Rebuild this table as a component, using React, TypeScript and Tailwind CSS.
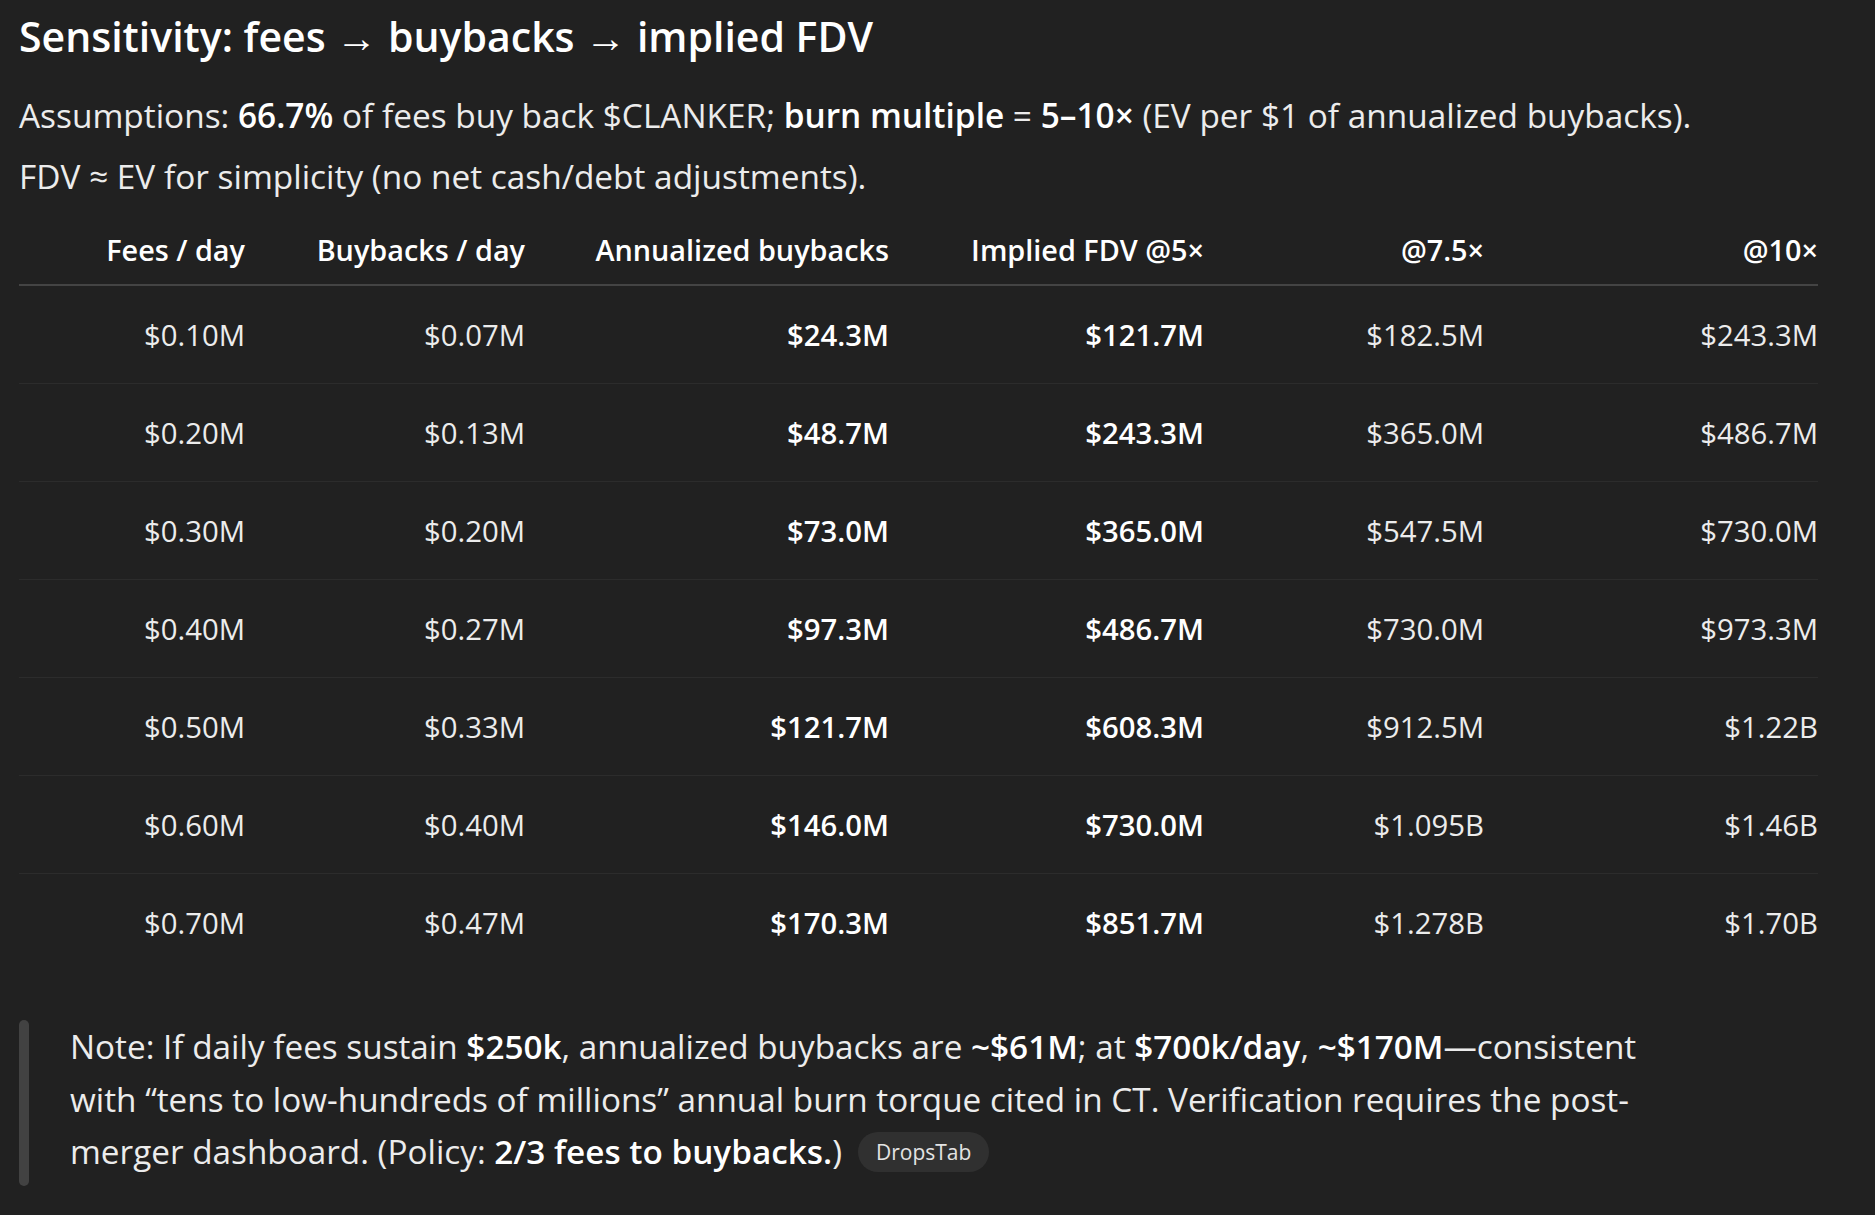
import React from "react";

const rows: string[][] = [
  ["$0.10M", "$0.07M", "$24.3M", "$121.7M", "$182.5M", "$243.3M"],
  ["$0.20M", "$0.13M", "$48.7M", "$243.3M", "$365.0M", "$486.7M"],
  ["$0.30M", "$0.20M", "$73.0M", "$365.0M", "$547.5M", "$730.0M"],
  ["$0.40M", "$0.27M", "$97.3M", "$486.7M", "$730.0M", "$973.3M"],
  ["$0.50M", "$0.33M", "$121.7M", "$608.3M", "$912.5M", "$1.22B"],
  ["$0.60M", "$0.40M", "$146.0M", "$730.0M", "$1.095B", "$1.46B"],
  ["$0.70M", "$0.47M", "$170.3M", "$851.7M", "$1.278B", "$1.70B"],
];

const headers = [
  "Fees / day",
  "Buybacks / day",
  "Annualized buybacks",
  "Implied FDV @5×",
  "@7.5×",
  "@10×",
];

const widths = ["w-[226px]", "w-[280px]", "w-[364px]", "w-[315px]", "w-[280px]", "w-[334px]"];

export default function App() {
  return (
    <div
      className="min-h-[1215px] w-full bg-[#212121] text-[#ececec]"
      style={{ fontFamily: '"Open Sans", "Noto Sans", sans-serif' }}
    >
      <div className="w-[1799px] pl-[19px] box-content">
        <h2 className="pt-[6px] text-[41px] leading-[60px] font-semibold text-white">
          Sensitivity: fees → buybacks → implied FDV
        </h2>

        <p className="mt-[19px] text-[33.4px] leading-[61px] whitespace-nowrap">
          Assumptions: <strong className="font-semibold text-white">66.7%</strong> of fees buy back $CLANKER;{" "}
          <strong className="font-semibold text-white">burn multiple</strong> ={" "}
          <strong className="font-semibold text-white">5–10×</strong> (EV per $1 of annualized buybacks).
          <br />
          FDV ≈ EV for simplicity (no net cash/debt adjustments).
        </p>

        <table className="table-fixed border-collapse w-[1799px]">
          <thead>
            <tr className="border-b-2 border-[#444444]">
              {headers.map((h, i) => (
                <th
                  key={h}
                  className={`${widths[i]} text-right font-semibold text-white text-[28.8px] leading-[40px] pt-[23px] pb-[14px] whitespace-nowrap`}
                >
                  {h}
                </th>
              ))}
            </tr>
          </thead>
          <tbody>
            {rows.map((r, ri) => (
              <tr
                key={ri}
                className={ri < rows.length - 1 ? "border-b border-[#2c2c2c]" : ""}
              >
                {r.map((c, ci) => (
                  <td
                    key={ci}
                    className={`text-right text-[29.3px] leading-[40px] py-[28.5px] whitespace-nowrap ${
                      ci === 2 || ci === 3 ? "font-semibold text-white" : ""
                    }`}
                  >
                    {c}
                  </td>
                ))}
              </tr>
            ))}
          </tbody>
        </table>

        <div className="mt-[49px] flex">
          <div className="w-[10px] h-[166px] rounded-full bg-[#424242] shrink-0" />
          <div className="pl-[41px] text-[33.3px] leading-[52.5px] whitespace-nowrap">
            Note: If daily fees sustain <strong className="font-semibold text-white">$250k</strong>, annualized
            buybacks are <strong className="font-semibold text-white">~$61M</strong>; at{" "}
            <strong className="font-semibold text-white">$700k/day</strong>,{" "}
            <strong className="font-semibold text-white">~$170M</strong>—consistent
            <br />
            with “tens to low-hundreds of millions” annual burn torque cited in CT. Verification requires the post-
            <br />
            merger dashboard. (Policy: <strong className="font-semibold text-white">2/3 fees to buybacks.</strong>)
            <span className="ml-[16px] inline-flex items-center align-middle h-[40px] px-[18px] rounded-full bg-[#303030] text-[21px] leading-none text-[#e3e3e3] relative -top-[3px]">
              DropsTab
            </span>
          </div>
        </div>
      </div>
    </div>
  );
}
